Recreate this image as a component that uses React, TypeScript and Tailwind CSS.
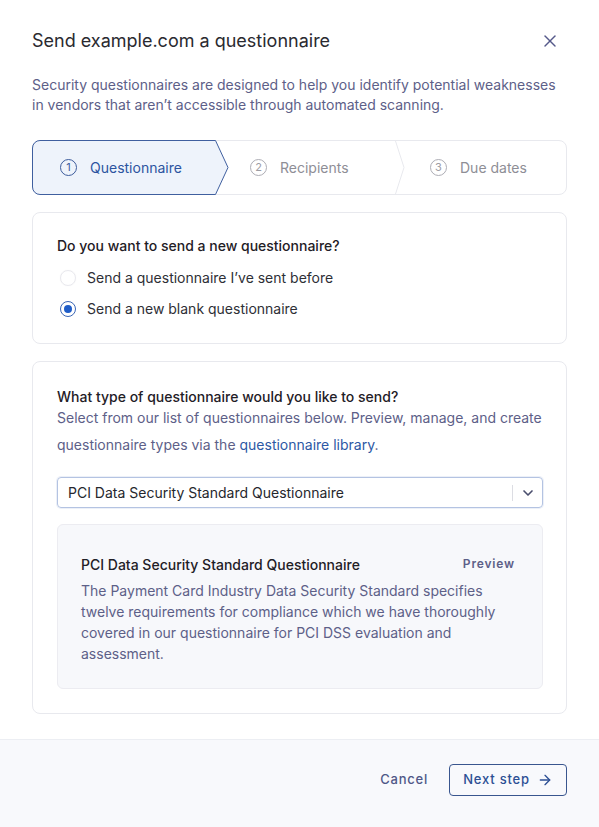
import { X, ChevronDown, ArrowRight } from "lucide-react";

function StepNumber({ n, active }: { n: number; active?: boolean }) {
  return (
    <span
      className={
        active
          ? "flex h-[17px] w-[17px] items-center justify-center rounded-full border border-[#3d5c9c] text-[11px] text-[#3d5c9c]"
          : "flex h-[17px] w-[17px] items-center justify-center rounded-full border border-[#adadb5] text-[11px] text-[#9c9ca4]"
      }
    >
      {n}
    </span>
  );
}

function Stepper() {
  return (
    <div className="mt-[25px] flex h-[55px] rounded-lg border border-[#e8e9ee]">
      {/* active step with arrow shape */}
      <div className="relative -my-px -ml-px flex w-[197px] items-center gap-[13px] pl-[28px]">
        <svg className="absolute inset-0 h-full w-full" viewBox="0 0 197 55" preserveAspectRatio="none">
          <path
            d="M8 0.5 H183.5 L196 27.5 L183.5 54.5 H8 A7.5 7.5 0 0 1 0.5 47 V8 A7.5 7.5 0 0 1 8 0.5 Z"
            fill="#eef3fb"
            stroke="#3f5f9f"
            strokeWidth="1"
          />
        </svg>
        <span className="relative">
          <StepNumber n={1} active />
        </span>
        <span className="relative text-sm text-[#2c54a0]">Questionnaire</span>
      </div>
      <div className="flex w-[166px] items-center gap-[13px] pl-[21px]">
        <StepNumber n={2} />
        <span className="text-sm text-[#8e8e96]">Recipients</span>
      </div>
      <svg className="h-full w-[10px] shrink-0" viewBox="0 0 10 53" preserveAspectRatio="none">
        <polyline points="0.5,0 9,26.5 0.5,53" fill="none" stroke="#e8e9ee" strokeWidth="1" />
      </svg>
      <div className="flex flex-1 items-center gap-[13px] pl-[25px]">
        <StepNumber n={3} />
        <span className="text-sm text-[#8e8e96]">Due dates</span>
      </div>
    </div>
  );
}

function Radio({ checked, label }: { checked?: boolean; label: string }) {
  return (
    <label className="flex h-6 items-center gap-[11px]">
      <span
        className={
          checked
            ? "ml-[3px] flex h-4 w-4 items-center justify-center rounded-full border-[1.5px] border-[#3a66b6]"
            : "ml-[3px] flex h-4 w-4 items-center justify-center rounded-full border border-[#e9e9ee] shadow-[0_0_1px_rgba(0,0,0,0.08)]"
        }
      >
        {checked && <span className="h-2 w-2 rounded-full bg-[#1f5dc8]" />}
      </span>
      <span className="text-sm text-[#2e2f36]">{label}</span>
    </label>
  );
}

export default function App() {
  return (
    <div className="min-h-[827px] bg-white font-['Inter','Liberation_Sans',sans-serif]">
      <div className="px-8 pt-[29px]">
        <div className="flex items-center justify-between">
          <h2 className="text-[18px] leading-6 text-[#2a2a30]">Send example.com a questionnaire</h2>
          <button className="mr-[7px] text-[#55598a]">
            <X size={20} strokeWidth={1.75} />
          </button>
        </div>
        <p className="mt-[22px] text-sm leading-5 text-[#5d6088]">
          Security questionnaires are designed to help you identify potential weaknesses in vendors that aren’t accessible through automated scanning.
        </p>

        <Stepper />

        <div className="mt-[17px] rounded-lg border border-[#e8e9ee] px-6 pt-[23px] pb-[22px]">
          <h3 className="text-sm font-medium leading-5 text-[#1f2026]">Do you want to send a new questionnaire?</h3>
          <div className="mt-[10px] flex flex-col gap-[7px]">
            <Radio label="Send a questionnaire I’ve sent before" />
            <Radio checked label="Send a new blank questionnaire" />
          </div>
        </div>

        <div className="mt-[17px] rounded-lg border border-[#e8e9ee] pt-[25px] pr-[23px] pb-6 pl-6">
          <h3 className="text-sm font-medium leading-5 text-[#1f2026]">What type of questionnaire would you like to send?</h3>
          <p className="-mt-[3px] text-sm leading-[27px] text-[#5d6088]">
            Select from our list of questionnaires below. Preview, manage, and create questionnaire types via the{" "}
            <a className="text-[#2d58a4]">questionnaire library</a>.
          </p>

          <div className="mt-[19px] flex h-[31px] items-center rounded border border-[#b4c3e2] pl-[10px] shadow-[0_0_0_1px_rgba(180,195,226,0.25)]">
            <span className="flex-1 text-sm text-[#26272d]">PCI Data Security Standard Questionnaire</span>
            <span className="h-4 w-px bg-[#dcdde3]" />
            <span className="flex w-[29px] items-center justify-center text-[#4a4e6e]">
              <ChevronDown size={16} strokeWidth={2.5} />
            </span>
          </div>

          <div className="mt-4 rounded-md border border-[#ececf1] bg-[#f7f8fb] pt-[30px] pr-[27px] pb-6 pl-[23px]">
            <div className="flex items-center justify-between">
              <span className="text-sm font-medium leading-5 text-[#1f2026]">PCI Data Security Standard Questionnaire</span>
              <span className="-mt-[2px] text-xs font-semibold tracking-[0.07em] text-[#5d6088]">Preview</span>
            </div>
            <p className="mt-[5px] text-sm leading-[21px] text-[#5d6088]">
              The Payment Card Industry Data Security Standard specifies twelve requirements for compliance which we have thoroughly covered in our questionnaire for PCI DSS evaluation and assessment.
            </p>
          </div>
        </div>
      </div>

      <div className="mt-[25px] flex h-[88px] items-start justify-end gap-[21px] border-t border-[#eceef3] bg-[#f8f9fc] px-8 pt-6">
        <button className="h-8 text-[13px] font-medium tracking-[0.06em] text-[#4f5787]">Cancel</button>
        <button className="flex h-8 w-[118px] items-center justify-center gap-[7px] rounded border border-[#39568f] text-[13px] font-medium tracking-[0.06em] text-[#2c4f94]">
          Next step
          <ArrowRight size={16} strokeWidth={2} />
        </button>
      </div>
    </div>
  );
}
